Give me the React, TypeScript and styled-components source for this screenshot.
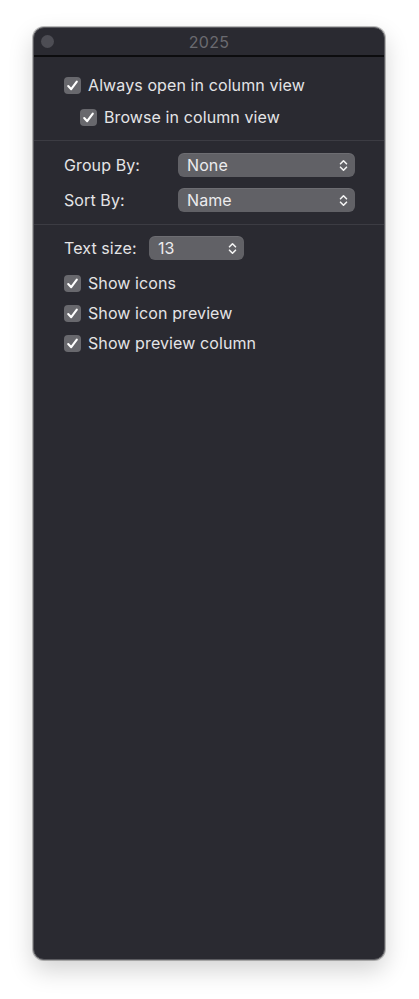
import React from "react";
import styled, { createGlobalStyle } from "styled-components";

const Global = createGlobalStyle`
  html, body { margin: 0; padding: 0; background: #ffffff; }
  body { font-family: Inter, "Noto Sans", "Liberation Sans", sans-serif; }
`;

const Page = styled.div`
  padding: 27px 0 0 33px;
  height: 999px;
  box-sizing: border-box;
`;

const Window = styled.div`
  width: 352px;
  height: 933px;
  box-sizing: border-box;
  background: #2a2a31;
  border: 1px solid #5c5c61;
  border-radius: 11px;
  box-shadow: 0 0 0 1px rgba(0,0,0,0.25), 0 10px 24px rgba(0,0,0,0.18);
  display: flex;
  flex-direction: column;
  overflow: hidden;
`;

const TitleBar = styled.div`
  height: 27px;
  border-bottom: 2px solid #0c0c0e;
  display: flex;
  align-items: center;
  justify-content: center;
  position: relative;
  color: #6a6a70;
  font-size: 16px;
  letter-spacing: 0.3px;
`;

const Light = styled.span`
  position: absolute;
  left: 7px;
  top: 7px;
  width: 13px;
  height: 13px;
  border-radius: 50%;
  background: #4d4d54;
`;

const Section = styled.div<{ $pt: number; $pb: number; $gap: number }>`
  padding: ${(p) => p.$pt}px 0 ${(p) => p.$pb}px 30px;
  display: flex;
  flex-direction: column;
  gap: ${(p) => p.$gap}px;
  border-bottom: ${(p) => (p.$pb ? "1px solid #3c3c43" : "none")};
`;

const Row = styled.label<{ $indent?: number }>`
  height: 24px;
  display: flex;
  align-items: center;
  gap: 7px;
  padding-left: ${(p) => p.$indent || 0}px;
  color: #e4e4e6;
  font-size: 16px;
  letter-spacing: 0.1px;
`;

const Box = styled.span`
  width: 17px;
  height: 17px;
  border-radius: 4px;
  background: #68686d;
  display: flex;
  align-items: center;
  justify-content: center;
  flex: none;
`;

const FieldRow = styled.div<{ $labelW: number }>`
  height: 24px;
  display: grid;
  grid-template-columns: ${(p) => p.$labelW}px auto;
  align-items: center;
  color: #e4e4e6;
  font-size: 16px;
  letter-spacing: 0.1px;
`;

const Popup = styled.div<{ $w: number }>`
  width: ${(p) => p.$w}px;
  height: 24px;
  box-sizing: border-box;
  border-radius: 6px;
  background: #616166;
  box-shadow: inset 0 1px 0 rgba(255,255,255,0.08);
  display: flex;
  align-items: center;
  justify-content: space-between;
  padding: 0 7px 0 9px;
  color: #ececee;
  font-size: 16px;
`;

const Check = () => (
  <svg width="13" height="13" viewBox="0 0 13 13">
    <path d="M2.2 7 L5.2 10.2 L10.8 2.6" fill="none" stroke="#fff" strokeWidth="2.1" strokeLinecap="round" strokeLinejoin="round" />
  </svg>
);

const Chevrons = () => (
  <svg width="9" height="13" viewBox="0 0 9 13">
    <path d="M1.5 4.8 L4.5 1.8 L7.5 4.8 M1.5 8.2 L4.5 11.2 L7.5 8.2" fill="none" stroke="#f2f2f2" strokeWidth="1.6" strokeLinecap="round" strokeLinejoin="round" />
  </svg>
);

const CheckRow = ({ label, indent }: { label: string; indent?: number }) => (
  <Row $indent={indent}>
    <Box><Check /></Box>
    {label}
  </Row>
);

export default function App() {
  return (
    <Page>
      <Global />
      <Window>
        <TitleBar>
          <Light />
          2025
        </TitleBar>
        <Section $pt={16} $pb={11} $gap={8}>
          <CheckRow label="Always open in column view" />
          <CheckRow label="Browse in column view" indent={16} />
        </Section>
        <Section $pt={12} $pb={12} $gap={11}>
          <FieldRow $labelW={114}>
            Group By:
            <Popup $w={177}>None<Chevrons /></Popup>
          </FieldRow>
          <FieldRow $labelW={114}>
            Sort By:
            <Popup $w={177}>Name<Chevrons /></Popup>
          </FieldRow>
        </Section>
        <Section $pt={11} $pb={0} $gap={6}>
          <FieldRow $labelW={85}>
            Text size:
            <Popup $w={95}>13<Chevrons /></Popup>
          </FieldRow>
          <Row style={{ marginTop: 5 }}><Box><Check /></Box>Show icons</Row>
          <CheckRow label="Show icon preview" />
          <CheckRow label="Show preview column" />
        </Section>
      </Window>
    </Page>
  );
}
